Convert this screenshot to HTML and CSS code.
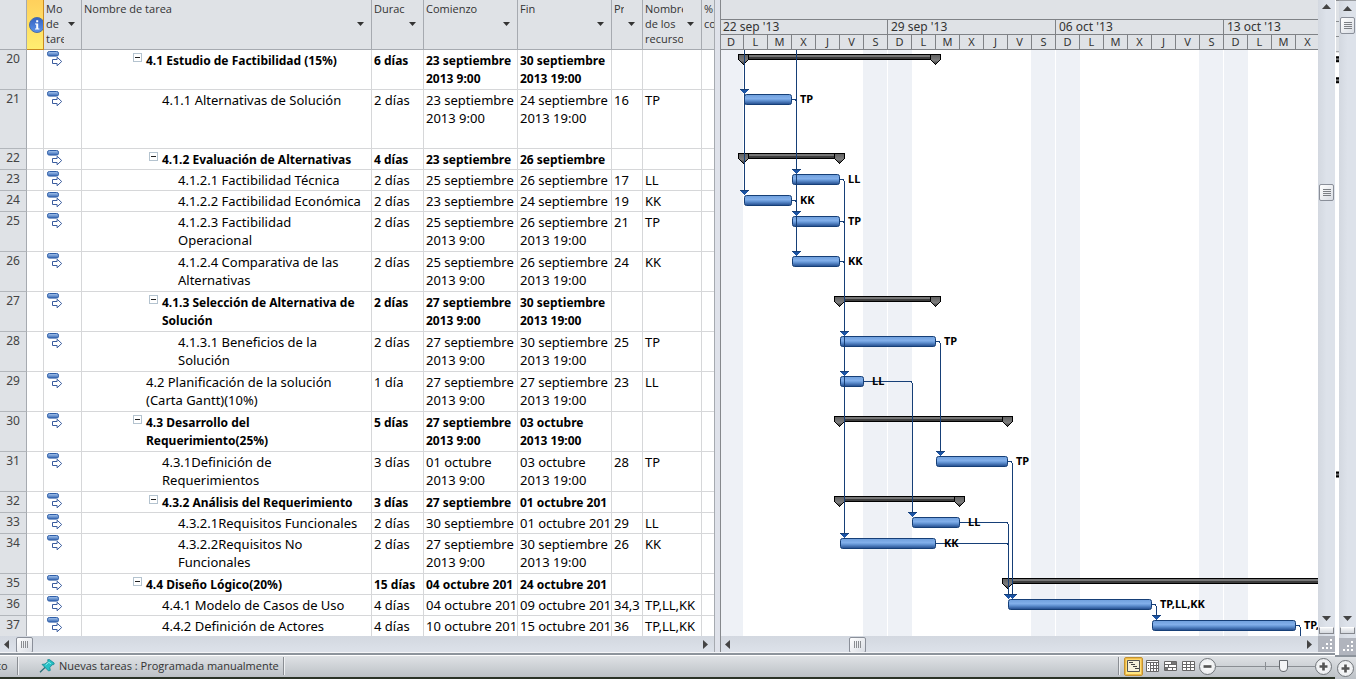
FILE: index.html
```html
<!DOCTYPE html>
<html lang="es">
<head>
<meta charset="utf-8">
<title>Carta Gantt</title>
<link rel="stylesheet" href="styles.css">
</head>
<body>
<svg class="defs" aria-hidden="true">
  <defs>
    <linearGradient id="pill" x1="0" y1="0" x2="0" y2="1"><stop offset="0" stop-color="#a9c8f0"/><stop offset="1" stop-color="#3566b2"/></linearGradient>
    <linearGradient id="barfill" x1="0" y1="0" x2="0" y2="1"><stop offset="0" stop-color="#6f9fdc"/><stop offset=".42" stop-color="#82afea"/><stop offset=".62" stop-color="#5f90d0"/><stop offset="1" stop-color="#20498a"/></linearGradient>
    <linearGradient id="capfill" x1="0" y1="0" x2="0" y2="1"><stop offset="0" stop-color="#606060"/><stop offset=".6" stop-color="#7c7c7c"/><stop offset="1" stop-color="#303030"/></linearGradient>
    <linearGradient id="infofill" x1="0" y1="0" x2="0" y2="1"><stop offset="0" stop-color="#3461c0"/><stop offset="1" stop-color="#5c93ea"/></linearGradient>
    <symbol id="mode" viewBox="0 0 16 16">
      <rect x=".5" y=".5" width="11" height="4.6" rx="1.8" fill="url(#pill)" stroke="#2f5ea8"/>
      <path d="M5.5 8.5h4.6V6.2l4.6 4.3-4.6 4.3v-2.3H5.500z" fill="#fff" stroke="#3a5c9e"/>
    </symbol>
    <symbol id="cap" viewBox="0 0 11 11"><path d="M.5 .5h10v5l-5 5-5-5z" fill="url(#capfill)" stroke="#000"/></symbol>
    <symbol id="tip" viewBox="0 0 9 5"><path d="M0 0h9v1H8v1H7v1H6v1H5v1H4V4H3V3H2V2H1V1H0z" fill="#1c54a4"/><path d="M0 0h9v1H0z" fill="#163f77"/></symbol>
  </defs>
</svg>

<div class="screen">
<div class="window">
  <main class="panes">
    <section class="sheet">
      <div class="sheet-view">
      <table class="grid">
        <colgroup><col class="c-num"><col class="c-info"><col class="c-mode"><col class="c-name"><col class="c-dur"><col class="c-date"><col class="c-date"><col class="c-pred"><col class="c-res"><col class="c-pct"></colgroup>
        <thead>
          <tr>
            <td></td>
            <th class="info" scope="col"><svg class="info-icon" viewBox="0 0 14 16" role="img" aria-label="Indicadores"><circle cx="8" cy="8" r="7.500" fill="url(#infofill)" stroke="#4a6ea8"/><path d="M7.200 3.200h2v2h-2zM6 6.600h3.200v4.800h1.200v1H6v-1h1.200V7.600H6z" fill="#fff"/></svg></th>
            <th scope="col"><div class="head"><span class="clip narrow">Mo<br>de<br>tare</span><button class="drop" aria-label="Filtrar modo de tarea"></button></div></th>
            <th scope="col"><div class="head"><span class="clip">Nombre de tarea</span><button class="drop" aria-label="Filtrar nombre"></button></div></th>
            <th scope="col"><div class="head"><span class="clip">Durac</span><button class="drop" aria-label="Filtrar duración"></button></div></th>
            <th scope="col"><div class="head"><span class="clip">Comienzo</span><button class="drop" aria-label="Filtrar comienzo"></button></div></th>
            <th scope="col"><div class="head"><span class="clip">Fin</span><button class="drop" aria-label="Filtrar fin"></button></div></th>
            <th scope="col"><div class="head"><span class="clip">Pr</span><button class="drop" aria-label="Filtrar predecesoras"></button></div></th>
            <th scope="col"><div class="head"><span class="clip">Nombre<br>de los<br>recurso</span><button class="drop" aria-label="Filtrar recursos"></button></div></th>
            <th scope="col"><div class="head"><span class="clip">%<br>co</span></div></th>
          </tr>
        </thead>
        <tbody>
          <tr class="two sum l1"><th scope="row">20</th><td></td><td><svg class="mode"><use href="#mode"/></svg></td><td class="name"><button class="fold" aria-label="Contraer"></button>4.1 Estudio de Factibilidad (15%)</td><td>6 días</td><td>23 septiembre<br>2013 9:00</td><td>30 septiembre<br>2013 19:00</td><td></td><td></td><td></td></tr>
          <tr class="three l2"><th scope="row">21</th><td></td><td><svg class="mode"><use href="#mode"/></svg></td><td class="name">4.1.1 Alternativas de Solución</td><td>2 días</td><td>23 septiembre<br>2013 9:00</td><td>24 septiembre<br>2013 19:00</td><td>16</td><td>TP</td><td></td></tr>
          <tr class="one sum l2"><th scope="row">22</th><td></td><td><svg class="mode"><use href="#mode"/></svg></td><td class="name"><button class="fold" aria-label="Contraer"></button>4.1.2 Evaluación de Alternativas</td><td>4 días</td><td>23 septiembre</td><td>26 septiembre</td><td></td><td></td><td></td></tr>
          <tr class="one l3"><th scope="row">23</th><td></td><td><svg class="mode"><use href="#mode"/></svg></td><td class="name">4.1.2.1 Factibilidad Técnica</td><td>2 días</td><td>25 septiembre</td><td>26 septiembre</td><td>17</td><td>LL</td><td></td></tr>
          <tr class="one l3"><th scope="row">24</th><td></td><td><svg class="mode"><use href="#mode"/></svg></td><td class="name">4.1.2.2 Factibilidad Económica</td><td>2 días</td><td>23 septiembre</td><td>24 septiembre</td><td>19</td><td>KK</td><td></td></tr>
          <tr class="two l3"><th scope="row">25</th><td></td><td><svg class="mode"><use href="#mode"/></svg></td><td class="name">4.1.2.3 Factibilidad<br>Operacional</td><td>2 días</td><td>25 septiembre<br>2013 9:00</td><td>26 septiembre<br>2013 19:00</td><td>21</td><td>TP</td><td></td></tr>
          <tr class="two l3"><th scope="row">26</th><td></td><td><svg class="mode"><use href="#mode"/></svg></td><td class="name">4.1.2.4 Comparativa de las<br>Alternativas</td><td>2 días</td><td>25 septiembre<br>2013 9:00</td><td>26 septiembre<br>2013 19:00</td><td>24</td><td>KK</td><td></td></tr>
          <tr class="two sum l2"><th scope="row">27</th><td></td><td><svg class="mode"><use href="#mode"/></svg></td><td class="name"><button class="fold" aria-label="Contraer"></button>4.1.3 Selección de Alternativa de<br>Solución</td><td>2 días</td><td>27 septiembre<br>2013 9:00</td><td>30 septiembre<br>2013 19:00</td><td></td><td></td><td></td></tr>
          <tr class="two l3"><th scope="row">28</th><td></td><td><svg class="mode"><use href="#mode"/></svg></td><td class="name">4.1.3.1 Beneficios de la<br>Solución</td><td>2 días</td><td>27 septiembre<br>2013 9:00</td><td>30 septiembre<br>2013 19:00</td><td>25</td><td>TP</td><td></td></tr>
          <tr class="two l1"><th scope="row">29</th><td></td><td><svg class="mode"><use href="#mode"/></svg></td><td class="name">4.2 Planificación de la solución<br>(Carta Gantt)(10%)</td><td>1 día</td><td>27 septiembre<br>2013 9:00</td><td>27 septiembre<br>2013 19:00</td><td>23</td><td>LL</td><td></td></tr>
          <tr class="two sum l1"><th scope="row">30</th><td></td><td><svg class="mode"><use href="#mode"/></svg></td><td class="name"><button class="fold" aria-label="Contraer"></button>4.3 Desarrollo del<br>Requerimiento(25%)</td><td>5 días</td><td>27 septiembre<br>2013 9:00</td><td>03 octubre<br>2013 19:00</td><td></td><td></td><td></td></tr>
          <tr class="two l2"><th scope="row">31</th><td></td><td><svg class="mode"><use href="#mode"/></svg></td><td class="name">4.3.1Definición de<br>Requerimientos</td><td>3 días</td><td>01 octubre<br>2013 9:00</td><td>03 octubre<br>2013 19:00</td><td>28</td><td>TP</td><td></td></tr>
          <tr class="one sum l2"><th scope="row">32</th><td></td><td><svg class="mode"><use href="#mode"/></svg></td><td class="name"><button class="fold" aria-label="Contraer"></button>4.3.2 Análisis del Requerimiento</td><td>3 días</td><td>27 septiembre</td><td>01 octubre 201</td><td></td><td></td><td></td></tr>
          <tr class="one l3"><th scope="row">33</th><td></td><td><svg class="mode"><use href="#mode"/></svg></td><td class="name">4.3.2.1Requisitos Funcionales</td><td>2 días</td><td>30 septiembre</td><td>01 octubre 201</td><td>29</td><td>LL</td><td></td></tr>
          <tr class="two l3"><th scope="row">34</th><td></td><td><svg class="mode"><use href="#mode"/></svg></td><td class="name">4.3.2.2Requisitos No<br>Funcionales</td><td>2 días</td><td>27 septiembre<br>2013 9:00</td><td>30 septiembre<br>2013 19:00</td><td>26</td><td>KK</td><td></td></tr>
          <tr class="one sum l1"><th scope="row">35</th><td></td><td><svg class="mode"><use href="#mode"/></svg></td><td class="name"><button class="fold" aria-label="Contraer"></button>4.4 Diseño Lógico(20%)</td><td>15 días</td><td>04 octubre 201</td><td>24 octubre 201</td><td></td><td></td><td></td></tr>
          <tr class="one l2"><th scope="row">36</th><td></td><td><svg class="mode"><use href="#mode"/></svg></td><td class="name">4.4.1 Modelo de Casos de Uso</td><td>4 días</td><td>04 octubre 201</td><td>09 octubre 201</td><td>34,3</td><td>TP,LL,KK</td><td></td></tr>
          <tr class="one l2"><th scope="row">37</th><td></td><td><svg class="mode"><use href="#mode"/></svg></td><td class="name">4.4.2 Definición de Actores</td><td>4 días</td><td>10 octubre 201</td><td>15 octubre 201</td><td>36</td><td>TP,LL,KK</td><td></td></tr>
        </tbody>
      </table>
      </div>
      <div class="hscroll">
        <button class="arrow left" aria-label="Izquierda"></button>
        <span class="thumb upright"></span>
        <button class="arrow right" aria-label="Derecha"></button>
      </div>
    </section>

    <div class="splitter"></div>

    <section class="chart">
      <div class="chart-view">
        <header class="scale">
          <div class="scale-top"></div>
          <div class="weeks"><span>22 sep '13</span><span>29 sep '13</span><span>06 oct '13</span><span>13 oct '13</span></div>
          <div class="days">
            <span>D</span><span>L</span><span>M</span><span>X</span><span>J</span><span>V</span><span>S</span>
            <span>D</span><span>L</span><span>M</span><span>X</span><span>J</span><span>V</span><span>S</span>
            <span>D</span><span>L</span><span>M</span><span>X</span><span>J</span><span>V</span><span>S</span>
            <span>D</span><span>L</span><span>M</span><span>X</span>
          </div>
        </header>
        <div class="plot">
        <svg class="bars" viewBox="721 50 672 587" width="672" height="587" role="img" aria-label="Diagrama de Gantt">
          <g class="rest">
            <path d="M721 50h22v587h-22zM863 50h24v587h-24zM888 50h24v587h-24zM1031 50h24v587h-24zM1056 50h24v587h-24zM1199 50h24v587h-24zM1224 50h24v587h-24z"/>
          </g>
          <g class="summary">
            <rect x="743.5" y="54.5" width="192" height="5"/><rect x="743.5" y="153.5" width="96" height="5"/><rect x="839.5" y="296.5" width="96" height="5"/><rect x="839.5" y="416.5" width="168" height="5"/><rect x="839.5" y="496.5" width="120" height="5"/><rect x="1007.5" y="578.5" width="400" height="5"/>
          </g>
          <g class="summary-core">
            <path d="M744 56h192M744 155h96M840 298h96M840 418h168M840 498h120M1008 580h400"/>
          </g>
          <g>
            <use href="#cap" x="738" y="54" width="11" height="11"/><use href="#cap" x="930" y="54" width="11" height="11"/>
            <use href="#cap" x="738" y="153" width="11" height="11"/><use href="#cap" x="834" y="153" width="11" height="11"/>
            <use href="#cap" x="834" y="296" width="11" height="11"/><use href="#cap" x="930" y="296" width="11" height="11"/>
            <use href="#cap" x="834" y="416" width="11" height="11"/><use href="#cap" x="1002" y="416" width="11" height="11"/>
            <use href="#cap" x="834" y="496" width="11" height="11"/><use href="#cap" x="954" y="496" width="11" height="11"/>
            <use href="#cap" x="1002" y="578" width="11" height="11"/>
          </g>
          <g class="task">
            <rect x="744.5" y="94.5" width="47" height="10" rx="2"/>
            <rect x="792.5" y="174.5" width="47" height="10" rx="2"/>
            <rect x="744.5" y="195.5" width="47" height="10" rx="2"/>
            <rect x="792.5" y="216.5" width="47" height="10" rx="2"/>
            <rect x="792.5" y="256.5" width="47" height="10" rx="2"/>
            <rect x="840.5" y="336.5" width="95" height="10" rx="2"/>
            <rect x="840.5" y="376.5" width="23" height="10" rx="2"/>
            <rect x="936.5" y="456.5" width="71" height="10" rx="2"/>
            <rect x="912.5" y="517.5" width="47" height="10" rx="2"/>
            <rect x="840.5" y="538.5" width="95" height="10" rx="2"/>
            <rect x="1008.5" y="599.5" width="143" height="10" rx="2"/>
            <rect x="1152.5" y="620.5" width="143" height="10" rx="2"/>
          </g>
          <g class="link">
            <path d="M744.500 50V194M796.500 50V256M792 99.500h3l1 1M792 200.500h3l1 1"/>
            <path d="M840 179.500h3l1.500 2V538M840 221.500h3l1 1M840 261.500h3l1 1"/>
            <path d="M936 341.500h3l1.500 2V455M864 381.500h47l1.500 2V516"/>
            <path d="M1008 461.500h3l1.500 2V598M960 522.500h47l1.500 2V598M936 543.500h71l1 1"/>
            <path d="M1152 604.500h3l1.500 2V619M1296 625.500h3l1.500 2V637"/>
          </g>
          <g>
            <use href="#tip" x="740" y="89" width="9" height="5"/><use href="#tip" x="740" y="190" width="9" height="5"/>
            <use href="#tip" x="792" y="169" width="9" height="5"/><use href="#tip" x="792" y="211" width="9" height="5"/><use href="#tip" x="792" y="251" width="9" height="5"/>
            <use href="#tip" x="840" y="331" width="9" height="5"/><use href="#tip" x="840" y="371" width="9" height="5"/><use href="#tip" x="840" y="533" width="9" height="5"/>
            <use href="#tip" x="936" y="451" width="9" height="5"/><use href="#tip" x="908" y="512" width="9" height="5"/>
            <use href="#tip" x="1004" y="594" width="9" height="5"/><use href="#tip" x="1008" y="594" width="9" height="5"/><use href="#tip" x="1152" y="615" width="9" height="5"/>
          </g>
          <g class="who">
            <text x="800" y="103">TP</text><text x="848" y="183">LL</text><text x="800" y="204">KK</text><text x="848" y="225">TP</text><text x="848" y="265">KK</text>
            <text x="944" y="345">TP</text><text x="872" y="385">LL</text><text x="1016" y="465">TP</text><text x="968" y="526">LL</text><text x="944" y="547">KK</text>
            <text x="1160" y="608">TP,LL,KK</text><text x="1304" y="629">TP,</text>
          </g>
        </svg>
        </div>
      </div>
      <div class="vscroll">
        <button class="arrow up" aria-label="Arriba"></button>
        <span class="thumb flat low"></span>
        <button class="arrow down" aria-label="Abajo"></button>
        <span class="split"></span>
      </div>
      <div class="hscroll">
        <button class="arrow left" aria-label="Izquierda"></button>
        <span class="thumb upright mid"></span>
        <button class="arrow right" aria-label="Derecha"></button>
      </div>
      <span class="grip"></span>
    </section>
  </main>

  <footer class="status">
    <span class="cut">to</span>
    <span class="rule"></span>
    <button class="new-tasks">
      <svg class="pin" viewBox="0 0 16 14" aria-hidden="true"><path d="M1 13.200 6.500 8" stroke="#2d6f78" stroke-width="1.300"/><path d="M3 5.400 6 5l3.200-2.600L8.600.800 10.400.500l4.800 3.600-.4 1.500-1.800.2-2.200 2.800.5 2.800-1.700.600z" fill="#27c2c6" stroke="#158590" stroke-width=".8"/><path d="M6.600 6 9.800 3.300l2 1.400" fill="none" stroke="#9beef0"/></svg>
      Nuevas tareas : Programada manualmente
    </button>
    <span class="rule"></span>
    <span class="fill"></span>
    <span class="rule"></span>
    <div class="views">
      <button class="on" aria-label="Diagrama de Gantt"><svg viewBox="0 0 13 12"><path d="M.5 .5h12v11H.5z" fill="#f6f1dc" stroke="#555"/><path d="M2 2.500h4M4 4.500h4M6 6.500h4M8 8.500h4" stroke="#444"/></svg></button>
      <button aria-label="Uso de tareas"><svg viewBox="0 0 13 12"><path d="M.5 .5h12v11H.5z" fill="#fff" stroke="#666"/><path d="M1 2.500h11M5 5.500h7M5 8.500h7M4.500 3v8M7.500 3v8M10.500 3v8" stroke="#666"/><path d="M2 5.500h1M2 8.500h1" stroke="#666"/></svg></button>
      <button aria-label="Organizador de equipo"><svg viewBox="0 0 13 12"><path d="M.5 1.500h12v9H.5z" fill="#fff" stroke="#666"/><path d="M.5 4.500h12M.5 7.500h12M7.500 1.500v3M4.500 4.500v3M8.500 7.500v3" stroke="#666"/><path d="M8 2h4v2H8zM1 8h3v2H1z" fill="#777"/></svg></button>
      <button aria-label="Hoja de recursos"><svg viewBox="0 0 13 12"><path d="M.5 1.500h12v9H.5zM.5 4.500h12M.5 7.500h12M4.500 1.500v9M8.500 1.500v9" fill="#fff" stroke="#666"/><path d="M.5 4.500h12M.5 7.500h12" stroke="#666"/></svg></button>
    </div>
    <div class="zoom">
      <button class="round" aria-label="Alejar"><svg viewBox="0 0 17 17"><path d="M4 7h9v3H4z" fill="#555"/></svg></button>
      <input class="zoom-range" type="range" min="0" max="100" value="70" aria-label="Zoom">
      <button class="round" aria-label="Acercar"><svg viewBox="0 0 17 17"><path d="M7 4h3v3h3v3h-3v3H7v-3H4V7h3z" fill="#555"/></svg></button>
    </div>
  </footer>
</div>

<aside class="behind">
  <svg class="behind-view" viewBox="0 0 4 653" preserveAspectRatio="none" aria-hidden="true">
    <path d="M1 0h3v51H1z" fill="#dfe2e6"/><path d="M1 0h3v1H1zM1 21h3v1H1zM1 36h3v1H1zM1 51h3v1H1z" fill="#8a8d91"/>
    <path d="M1 56h3v6H1zM1 77h3v6H1zM1 470h3v6H1z" fill="#000"/><path d="M1 58h3v2H1zM1 79h3v2H1zM1 472h3v2H1z" fill="#6a6a6a"/>
  </svg>
  <div class="vscroll">
    <button class="arrow up" aria-label="Arriba"></button>
    <span class="thumb flat"></span>
    <button class="arrow down" aria-label="Abajo"></button>
    <span class="split"></span>
    <span class="grip"></span>
  </div>
  <div class="behind-status"><button class="round" aria-label="Acercar"><svg viewBox="0 0 17 17"><path d="M7 4h3v3h3v3h-3v3H7v-3H4V7h3z" fill="#555"/></svg></button></div>
</aside>
</div>
</body>
</html>
```
FILE: styles.css
```css
* { box-sizing: border-box; }
body { margin: 0; background: #fff; color: #000; font: 13px/18px "Noto Sans", "Open Sans", sans-serif; }
button { margin: 0; padding: 0; border: 0; background: none; font: inherit; color: inherit; }
svg { display: block; }
.defs { position: absolute; width: 0; height: 0; }

.screen { display: flex; height: 100vh; overflow: hidden; }
.window { flex: 1; min-width: 0; display: flex; flex-direction: column; border-bottom: 2px solid #2b3326; }
.panes { flex: 1; min-height: 0; display: flex; }

/* Task sheet */
.sheet { width: 715px; display: flex; flex-direction: column; border-right: 1px solid #a6aab0; }
.sheet-view { flex: 1; min-height: 0; overflow: hidden; }
.grid { width: 715px; table-layout: fixed; border-collapse: separate; border-spacing: 0; }
.c-num { width: 27px; } .c-info { width: 17px; } .c-mode { width: 38px; } .c-name { width: 290px; } .c-dur { width: 52px; }
.c-date { width: 94px; } .c-pred { width: 31px; } .c-res { width: 59px; } .c-pct { width: 13px; }

.grid thead th, .grid thead td { height: 50px; padding: 0; background: #dfe2e6; border-right: 1px solid #a6aab0; border-bottom: 1px solid #a6aab0; vertical-align: top; font: 11px/15px "Open Sans", sans-serif; color: #333; text-align: left; }
.grid thead th.info { background: linear-gradient(#ffd05c, #ffee70); border-color: #c98a20; vertical-align: middle; }
.info-icon { width: 14px; height: 16px; margin-left: 2px; }
.head { display: flex; height: 48px; padding: 1px 7px 0 2px; gap: 4px; }
.clip { flex: 1; min-width: 0; overflow: hidden; white-space: nowrap; }
.clip.narrow { flex: none; width: 18px; margin-right: auto; }
.drop { flex: none; width: 7px; height: 4px; margin-top: 21px; background: #333; clip-path: polygon(0 0, 100% 0, 50% 100%); }
.grid th:last-child .head { padding-right: 0; }

.grid tbody td { padding: 1px 0 0 2px; border-right: 1px solid #d6d7d9; border-bottom: 1px solid #d6d7d9; vertical-align: top; white-space: nowrap; overflow: hidden; }
.grid tbody th { padding: 0; background: #dfe2e6; border-right: 1px solid #a6aab0; border-bottom: 1px solid #b2b6bb; vertical-align: top; font-size: 12px; font-weight: normal; color: #444; }
.one td, .one th { height: 21px; }
.two td, .two th { height: 40px; }
.three td, .three th { height: 59px; }
.grid .sum td { padding-top: 2px; font-size: 12px; font-weight: bold; }
.grid tbody td:nth-child(3) { padding: 1px 0 0 3px; }
.mode { width: 16px; height: 16px; }
.grid .l1 .name { padding-left: 64px; }
.grid .l2 .name { padding-left: 80px; }
.grid .l3 .name { padding-left: 96px; }
.fold { float: left; width: 9px; height: 9px; margin: 1px 4px 0 -13px; border: 1px solid #b4c3cf; background: linear-gradient(#222, #222) center / 5px 1px no-repeat #fff; }

.splitter { width: 6px; background: #dfe2ea; border-right: 1px solid #85888c; }

/* Scrollbars */
.hscroll { height: 17px; display: flex; align-items: center; background: linear-gradient(#d3d8e0, #dde2ea); }
.vscroll { width: 17px; display: flex; flex-direction: column; align-items: center; background: linear-gradient(90deg, #d3d8e0, #dde2ea 50%); }
.arrow { flex: none; background: #444; }
.left { width: 5px; height: 9px; margin: 0 7px 0 4px; clip-path: polygon(100% 0, 100% 100%, 0 50%); }
.right { width: 5px; height: 9px; margin: 0 6px 0 auto; clip-path: polygon(0 0, 0 100%, 100% 50%); }
.up { width: 9px; height: 5px; margin-top: 4px; clip-path: polygon(50% 0, 100% 100%, 0 100%); }
.down { width: 9px; height: 5px; margin-top: auto; clip-path: polygon(0 0, 100% 0, 50% 100%); }
.thumb { flex: none; display: flex; align-items: center; justify-content: center; border: 1px solid #8a8f99; border-radius: 2px; background: linear-gradient(135deg, #fff, #d9dde4); }
.thumb::before { content: ""; }
.upright { width: 17px; height: 16px; }
.upright::before { width: 7px; height: 7px; background: repeating-linear-gradient(90deg, #8a8d91 0 1px, transparent 1px 2px); }
.flat { width: 15px; height: 17px; margin-top: 8px; }
.flat::before { width: 8px; height: 7px; background: repeating-linear-gradient(#7c7f84 0 1px, transparent 1px 2px); }
.low { margin-top: 175px; }
.mid { margin-left: 112px; }
.split { width: 15px; height: 7px; margin: 6px 0 2px; border: 1px solid #85888e; border-top-color: #fff; background: linear-gradient(#f4f5f7, #d4d8de); }
.grip { width: 17px; height: 17px; background: conic-gradient(#fff 0 0) 12px 3px / 2px 2px no-repeat, conic-gradient(#fff 0 0) 12px 7px / 2px 2px no-repeat, conic-gradient(#fff 0 0) 8px 7px / 2px 2px no-repeat, conic-gradient(#fff 0 0) 12px 11px / 2px 2px no-repeat, conic-gradient(#fff 0 0) 8px 11px / 2px 2px no-repeat, conic-gradient(#fff 0 0) 4px 11px / 2px 2px no-repeat, #b0b4bd; }

/* Gantt chart */
.chart { flex: 1; min-width: 0; display: grid; grid-template: minmax(0, 1fr) 17px / minmax(0, 1fr) 17px; }
.chart-view { min-width: 0; min-height: 0; overflow: hidden; display: flex; flex-direction: column; }
.scale { flex: none; background: #dfe2e6; color: #333; font-size: 11px; }
.scale-top { height: 20px; border-bottom: 1px solid #7f8286; }
.weeks, .days { display: flex; height: 15px; border-bottom: 1px solid #7f8286; line-height: 14px; }
.weeks span { flex: none; width: 168px; padding-left: 3px; border-right: 1px solid #7f8286; font-size: 12px; }
.weeks span:first-child { width: 167px; padding-left: 2px; }
.days span { flex: none; width: 24px; border-right: 1px solid #7f8286; text-align: center; }
.days span:first-child { width: 23px; padding-right: 2px; }
.plot { flex: 1; min-height: 0; overflow: hidden; }
.bars { shape-rendering: crispEdges; }
.rest { fill: #eef1f6; }
.summary { fill: #3c3c3c; stroke: #000; }
.summary-core { stroke: #777; stroke-width: 2; fill: none; }
.task { fill: url(#barfill); stroke: #163f77; shape-rendering: auto; }
.link { fill: none; stroke: #163f77; }
.who { font: bold 11px "Noto Sans", "Open Sans", sans-serif; }

/* Status bar */
.status { flex: none; height: 24px; display: flex; align-items: center; border-top: 2px solid #8d949c; background: linear-gradient(#fff 0 1px, #dfe2e5 1px, #bcc1c6); box-shadow: 0 -1px #f4f5f7; font: 11px/18px "Open Sans", sans-serif; color: #333; }
.cut { width: 17px; overflow: hidden; text-indent: -3px; }
.rule { width: 2px; height: 18px; border-left: 1px solid #8a8e93; border-right: 1px solid #eef0f2; }
.new-tasks { display: flex; align-items: center; gap: 4px; padding: 0 4px 0 20px; white-space: nowrap; }
.pin { width: 16px; height: 14px; }
.fill { flex: 1; }
.views { display: flex; align-items: center; padding-left: 4px; }
.views button { width: 18px; height: 19px; display: grid; place-items: center; border: 1px solid transparent; border-radius: 2px; }
.views .on { width: 19px; border-color: #c2922e; background: linear-gradient(#ffd768, #ffe983); box-shadow: inset 0 0 0 1px #eeb94a; }
.views svg { width: 13px; height: 12px; }
.zoom { display: flex; align-items: center; padding: 0 3px 0 2px; }
.round { flex: none; width: 17px; height: 17px; border: 1px solid #72767b; border-radius: 50%; background: radial-gradient(#fff, #e3e6e9); display: grid; place-items: center; }
.round svg { width: 15px; height: 15px; }
.zoom-range { appearance: none; width: 99px; height: 16px; margin: 0; background: linear-gradient(#8a8e93, #8a8e93) 50% 50% / 1px 8px no-repeat, linear-gradient(#8a8e93, #8a8e93) center / 100% 1px no-repeat; }
.zoom-range::-webkit-slider-thumb { appearance: none; width: 9px; height: 12px; border: 1px solid #666a6f; border-radius: 1px 1px 5px 5px; background: #f4f5f6; }

/* Strip of the window that lies behind */
.behind { width: 25px; padding-right: 4px; display: grid; grid-template: minmax(0, 1fr) auto / 4px 17px; background: #fff; }
.behind-view { width: 4px; height: 100%; }
.behind .vscroll { border-top: 1px solid #9a9da2; }
.behind .up { margin-top: 5px; }
.behind .flat { margin-top: 6px; }
.behind .split { margin-bottom: 4px; }
.behind-status { grid-column: 1 / -1; height: 24px; display: grid; place-items: center; border-top: 2px solid #8d949c; background: linear-gradient(#dfe2e5, #bcc1c6); }
```
